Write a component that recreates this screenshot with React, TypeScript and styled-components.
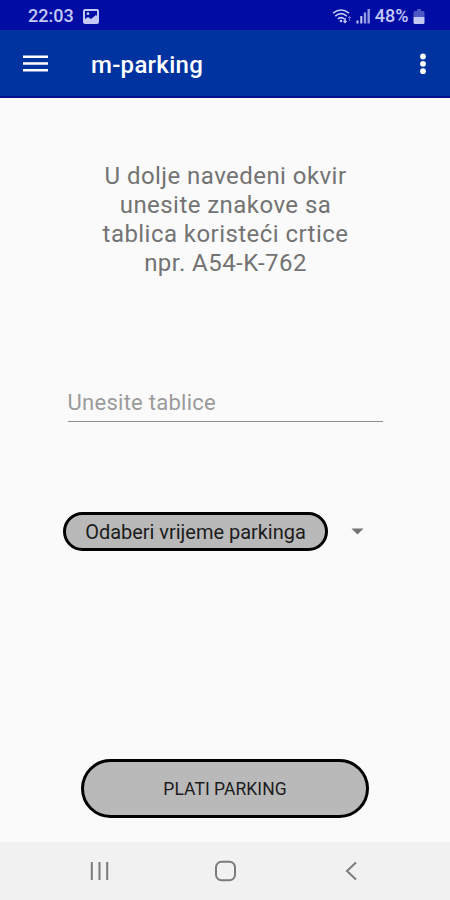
import React from "react";
import styled, { createGlobalStyle } from "styled-components";

const GlobalStyle = createGlobalStyle`
  *, *::before, *::after { box-sizing: border-box; }
  body { margin: 0; font-family: Roboto, "Noto Sans", sans-serif; }
  button, input { font-family: inherit; }
`;

const Screen = styled.div`
  display: flex;
  flex-direction: column;
  width: 450px;
  height: 900px;
  overflow: hidden;
  background: #fafafa;
`;

const StatusBar = styled.header`
  display: flex;
  align-items: center;
  height: 30px;
  padding: 2px 25px 0 28px;
  background: #000ca4;
  color: #c3c8f4;
`;

const StatusText = styled.span<{ $spacing: number }>`
  font-size: 18px;
  line-height: 20px;
  font-weight: 500;
  letter-spacing: ${({ $spacing }) => $spacing}px;
  white-space: nowrap;
`;

const StatusGroup = styled.div<{ $end?: boolean; $gap: number }>`
  display: flex;
  align-items: center;
  gap: ${({ $gap }) => $gap}px;
  margin-left: ${({ $end }) => ($end ? "auto" : "0")};
`;

const Icon = styled.svg`
  display: block;
  flex: none;
`;

const AppBar = styled.div`
  display: flex;
  align-items: center;
  height: 68px;
  padding: 1px 15px 0 23px;
  background: #0033a0;
  border-bottom: 2px solid #00108c;
  color: #fff;
`;

const Title = styled.h1`
  flex: 1;
  margin: 3px 0 0 43px;
  font-size: 24px;
  line-height: 28px;
  font-weight: 500;
  letter-spacing: 0.28px;
`;

const IconButton = styled.button`
  padding: 0;
  border: 0;
  background: none;
  color: inherit;
`;

const Main = styled.main`
  display: flex;
  flex-direction: column;
  align-items: center;
  height: 744px;
`;

const Instruction = styled.p`
  margin: 64px 0 0;
  padding-left: 1px;
  color: #737373;
  font-size: 24px;
  line-height: 29px;
  letter-spacing: 0.45px;
  text-align: center;
  white-space: pre-line;
`;

const PlateInput = styled.input`
  width: 315px;
  height: 38px;
  margin: 106px 0 0;
  padding: 0 0 1px;
  border: 0;
  border-bottom: 1.5px solid #8c8c8c;
  border-radius: 0;
  background: transparent;
  font-size: 22px;
  letter-spacing: 0.27px;
  outline: none;
  &::placeholder { color: #9b9b9b; opacity: 1; }
`;

const DurationRow = styled.div`
  display: flex;
  align-items: center;
  gap: 23px;
  align-self: flex-start;
  margin: 90px 0 0 63px;
`;

const Pill = styled.button<{ $width: number; $height: number; $size: number; $spacing: number }>`
  width: ${({ $width }) => $width}px;
  height: ${({ $height }) => $height}px;
  padding: 0;
  border: 3px solid #000;
  border-radius: ${({ $height }) => $height / 2}px;
  background: #b9b9b9;
  color: #1c1c1c;
  font-size: ${({ $size }) => $size}px;
  letter-spacing: ${({ $spacing }) => $spacing}px;
  white-space: nowrap;
`;

const Actions = styled.div`
  margin-top: auto;
  padding-bottom: 24px;
`;

const NavBar = styled.nav`
  display: grid;
  grid-template-columns: 1fr 22px 1fr;
  align-items: center;
  flex: 1;
  padding: 0 89px;
  background: #f1f1f1;
  color: #7b7b7b;
`;

const BackIcon = styled(Icon)`
  justify-self: end;
  margin-right: 4px;
`;

export default function App() {
  return (
    <>
      <GlobalStyle />
      <Screen>
        <StatusBar>
          <StatusGroup $gap={9}>
            <StatusText $spacing={0}>22:03</StatusText>
            <Icon width="16" height="15" viewBox="0 0 16 15">
              <path fill="currentColor" fillRule="evenodd" d="M2 0h12a2 2 0 0 1 2 2v11a2 2 0 0 1-2 2H2a2 2 0 0 1-2-2V2a2 2 0 0 1 2-2ZM2 2v8l3-2 3 2 5-4 1 1V2H2Z" />
              <circle cx="5" cy="4.7" r="1.4" fill="currentColor" />
            </Icon>
          </StatusGroup>
          <StatusGroup $end $gap={4.5}>
            <Icon width="38" height="17" viewBox="0 0 38 17" fill="none" stroke="currentColor">
              <path strokeWidth="1.6" d="M1 5.2Q9-1.2 17 5.2M3.2 8.2Q9 3.2 14.8 8.2M5.8 10.8Q9 8.3 12 10.8" />
              <circle cx="9" cy="13" r="1.3" fill="currentColor" stroke="none" />
              <path strokeWidth="1.5" d="M13 10v4.5M11.5 13l1.5 1.5 1.5-1.5" />
              <path strokeWidth="1" opacity=".5" d="M17.5 13V8.5M16 10l1.5-1.5L19 10" />
              <path strokeWidth="2" d="M25.5 15.5v-3M29.3 15.5V8" />
              <path strokeWidth="2.4" opacity=".75" d="M33 15.5V4.5M36.7 15.5V1" />
            </Icon>
            <StatusText $spacing={0}>48%</StatusText>
            <Icon width="12" height="15" viewBox="0 0 12 15" fill="currentColor">
              <path opacity=".4" d="M4 0h4v2h2a1.5 1.5 0 0 1 1.5 1.5V8H.5V3.5A1.5 1.5 0 0 1 2 2h2Z" />
              <path d="M.5 8h11v5.5A1.5 1.5 0 0 1 10 15H2a1.5 1.5 0 0 1-1.5-1.5Z" />
            </Icon>
          </StatusGroup>
        </StatusBar>
        <AppBar>
          <IconButton aria-label="Izbornik">
            <Icon width="25" height="17" viewBox="0 0 25 17">
              <path stroke="currentColor" strokeWidth="2.6" d="M0 1.7h25M0 8.5h25M0 15.3h25" />
            </Icon>
          </IconButton>
          <Title>m-parking</Title>
          <IconButton aria-label="Opcije">
            <Icon width="24" height="22" viewBox="0 0 24 22" fill="currentColor">
              <circle cx="12" cy="3.5" r="2.9" />
              <circle cx="12" cy="10.8" r="2.9" />
              <circle cx="12" cy="18.2" r="2.9" />
            </Icon>
          </IconButton>
        </AppBar>
        <Main>
          <Instruction>{"U dolje navedeni okvir\nunesite znakove sa\ntablica koristeći crtice\nnpr. A54-K-762"}</Instruction>
          <PlateInput placeholder="Unesite tablice" />
          <DurationRow>
            <Pill $width={265} $height={39} $size={20} $spacing={-0.03}>Odaberi vrijeme parkinga</Pill>
            <Icon width="13" height="7" viewBox="0 0 13 7">
              <path fill="#737373" d="M.5.5h12l-6 6Z" />
            </Icon>
          </DurationRow>
          <Actions>
            <Pill $width={288} $height={59} $size={17.5} $spacing={0.05}>PLATI PARKING</Pill>
          </Actions>
        </Main>
        <NavBar>
          <Icon width="20" height="20" viewBox="0 0 20 20" stroke="currentColor" strokeWidth="2">
            <path d="M2.8 1v18M10.5 1v18M18.2 1v18" />
          </Icon>
          <Icon width="22" height="22" viewBox="0 0 22 22" fill="none" stroke="currentColor" strokeWidth="2">
            <rect x="2" y="1.8" width="19" height="18.4" rx="5.5" />
          </Icon>
          <BackIcon width="12" height="20" viewBox="0 0 12 20" fill="none" stroke="currentColor" strokeWidth="2">
            <path d="M11 1.5 2 10l9 8.5" />
          </BackIcon>
        </NavBar>
      </Screen>
    </>
  );
}
